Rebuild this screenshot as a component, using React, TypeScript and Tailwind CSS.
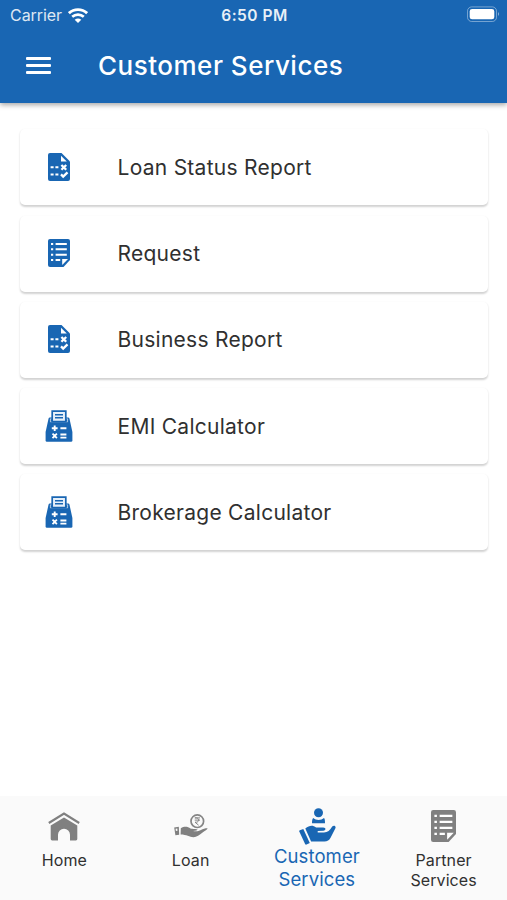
import React from "react";

interface IconProps {
  className?: string;
}

const ReportIcon: React.FC<IconProps> = ({ className }) => (
  <svg className={className} viewBox="0 0 22 28" fill="none">
    <path
      d="M2 0H13.5L22 8.5V26a2 2 0 0 1-2 2H2a2 2 0 0 1-2-2V2a2 2 0 0 1 2-2Z"
      fill="#1966b3"
    />
    <path d="M13 2.8V8.5H18.8Z" fill="#fff" />
    <path
      d="M2.6 14.3H5.6M7.4 14.3H10.4M2.6 21.5H5.6M7.4 21.5H10.4"
      stroke="#fff"
      strokeWidth="1.9"
    />
    <path
      d="M13.4 12L18.2 16.8M18.2 12L13.4 16.8M13 21.4L15.2 23.6L19.5 19.4"
      stroke="#fff"
      strokeWidth="2.3"
    />
  </svg>
);

const ListIcon: React.FC<IconProps> = ({ className }) => (
  <svg className={className} viewBox="0 0 22 28" fill="none">
    <path
      d="M2 0H20a2 2 0 0 1 2 2V21L15.5 28H2a2 2 0 0 1-2-2V2a2 2 0 0 1 2-2Z"
      fill="currentColor"
    />
    <path
      d="M3 5H5.2M3 10.3H5.2M3 15.7H5.2M3 21H5.2M7.6 5H18.8M7.6 10.3H18.8M7.6 15.7H18.8M7.6 21H12.2"
      stroke="#fff"
      strokeWidth="2"
    />
    <path d="M14.2 20H20L14.2 26Z" fill="#fff" />
  </svg>
);

const CalculatorIcon: React.FC<IconProps> = ({ className }) => (
  <svg className={className} viewBox="0 0 28 32" fill="none">
    <path
      d="M4.8 7.6H23.2Q24.2 7.6 24.5 8.8L27.4 22V30.4a1.3 1.3 0 0 1-1.3 1.3H1.9A1.3 1.3 0 0 1 .6 30.4V22L3.5 8.8Q3.8 7.6 4.8 7.6Z"
      fill="#1966b3"
    />
    <path d="M5.4 11.8V8.8H22.6V11.8Z" stroke="#fff" strokeWidth="0.8" opacity="0.8" />
    <path d="M7.2 11.6V1.2H20.8V11.6Z" fill="#e6f0fa" stroke="#1966b3" strokeWidth="1.7" />
    <path d="M10 4.8H18M10 7.8H18" stroke="#1966b3" strokeWidth="1.5" />
    <path
      d="M6.8 18.2H12.6M9.7 15.4V21M15.4 18.2H21.4"
      stroke="#fff"
      strokeWidth="1.9"
    />
    <path
      d="M7.5 23.6L11.9 28.2M11.9 23.6L7.5 28.2M15.4 24.5H21.4M15.4 27.7H21.4"
      stroke="#fff"
      strokeWidth="1.8"
    />
  </svg>
);

const HomeIcon: React.FC<IconProps> = ({ className }) => (
  <svg className={className} viewBox="0 0 32 29" fill="none">
    <path d="M.8 11L16 1.6L31.2 11" stroke="#808080" strokeWidth="2.2" />
    <path
      d="M16 5.6L29.3 13.6V27a1.4 1.4 0 0 1-1.4 1.4H22V22.8a6 6 0 0 0-12 0V28.4H4.1A1.4 1.4 0 0 1 2.7 27V13.6Z"
      fill="#808080"
    />
  </svg>
);

const LoanIcon: React.FC<IconProps> = ({ className }) => (
  <svg className={className} viewBox="0 0 34 24" fill="none">
    <circle cx="23.3" cy="7.2" r="6.3" stroke="#858585" strokeWidth="1.7" />
    <path
      d="M20.7 3.9H26M20.7 6.1H26M21 3.9H22.3C25.4 3.9 25.4 8.2 22.3 8.2H21L24.6 11.2"
      stroke="#858585"
      strokeWidth="1"
    />
    <path
      d="M6.8 14.2C10.5 11.9 13.8 12.6 16.5 14.4C18.5 15.2 22.8 14.5 23.4 15.6C23.8 16.6 22 16.8 19 17C22 17.8 24.5 17.2 27 16C29 14.9 31.4 14.2 33.6 14.3C33.5 15.8 30.8 16.8 28.6 18.5C25.5 21 22.5 23.3 19.4 23.2C15.5 23 12.5 20.5 6.6 20.5Z"
      fill="#808080"
    />
    <path d="M.2 13.4L4.8 12.8L5.2 20.8L1.4 21.2Z" fill="#808080" />
    <path d="M1.6 14.7L3.3 14.5L3.5 16.7L1.9 16.9Z" fill="#fafafa" />
  </svg>
);

const CustomerIcon: React.FC<IconProps> = ({ className }) => (
  <svg className={className} viewBox="0 0 37 37" fill="#1966b3">
    <circle cx="19.5" cy="4.7" r="4.5" />
    <path d="M14.2 10.1C17 12.7 22.2 12.7 25 10.1C25.8 11 26 12.4 26 15.2H13C13 12.4 13.4 11 14.2 10.1Z" />
    <path d="M.8 22.3L4.3 21L10.8 34.9L7.5 36.6Q6.6 37 6.1 36.1L.3 23.6Q0 22.7 .8 22.3Z" />
    <path d="M6.3 20.5C10.4 17.2 13.7 17 17.1 19.4H24.2C27.3 19.5 27.1 22.4 24.4 22.7L18.7 23.1V24.6H25C28.6 24.5 31 22.4 33.2 18.6C34.6 16.7 37.4 17.8 36.4 20.2L31.7 29.6C30 32.6 28.5 33.5 25.4 33.5H12.1Z" />
  </svg>
);

const WifiIcon: React.FC<IconProps> = ({ className }) => (
  <svg className={className} viewBox="0 0 20 15" fill="none">
    <path d="M.9 5.2C6 .4 14 .4 19.1 5.2" stroke="#fff" strokeWidth="2.8" />
    <path d="M4.2 8.8C7.5 5.9 12.5 5.9 15.8 8.8" stroke="#fff" strokeWidth="2.7" />
    <path d="M10 14.9L6.7 11.8Q10 9.1 13.3 11.8Z" fill="#fff" />
  </svg>
);

const services = [
  { title: "Loan Status Report", icon: <ReportIcon className="w-[22px] h-7" /> },
  { title: "Request", icon: <ListIcon className="w-[22px] h-7 text-[#1966b3]" /> },
  { title: "Business Report", icon: <ReportIcon className="w-[22px] h-7" /> },
  { title: "EMI Calculator", icon: <CalculatorIcon className="w-7 h-8" /> },
  { title: "Brokerage Calculator", icon: <CalculatorIcon className="w-7 h-8" /> },
];

const StatusBar: React.FC = () => (
  <div className="grid grid-cols-3 items-center h-[30px] pl-[10px] pr-[7px] text-white">
    <div className="flex items-center gap-[6px]">
      <span className="text-[16px] leading-5 tracking-[-0.05px] opacity-85">Carrier</span>
      <WifiIcon className="w-5 h-[15px]" />
    </div>
    <span className="pt-px pr-[1px] text-center text-[15.5px] leading-5 font-semibold tracking-[0.5px] whitespace-nowrap opacity-90">
      6:50 PM
    </span>
    <svg className="w-[34px] h-4 -mt-[2px] justify-self-end" viewBox="0 0 34 16" fill="none">
      <rect x="1.5" y=".9" width="29" height="14.6" rx="4.2" stroke="#fff" strokeOpacity=".4" />
      <rect x="3.7" y="3.1" width="24.6" height="10.2" rx="2.4" fill="#fff" />
      <path d="M32 6.1Q34 8.1 32 10.1Z" fill="#fff" fillOpacity=".5" />
    </svg>
  </div>
);

const App: React.FC = () => {
  return (
    <div className="flex flex-col w-full h-[900px] overflow-hidden bg-white font-[Inter,'Liberation_Sans',sans-serif] text-[#303030]">
      <header className="h-[103px] shrink-0 bg-[#1966b3] shadow-[0_2px_5px_rgba(0,0,0,0.35)]">
        <StatusBar />
        <div className="flex items-center h-[72px] pl-[26px]">
          <button type="button" aria-label="Menu" className="flex flex-col gap-[4px] w-[25px] -mt-px">
            <span className="h-[3px] rounded-[1px] bg-white" />
            <span className="h-[3px] rounded-[1px] bg-white" />
            <span className="h-[3px] rounded-[1px] bg-white" />
          </button>
          <h1 className="ml-[47px] text-[26px] leading-8 font-[550] tracking-[0.5px] whitespace-nowrap text-white">
            Customer Services
          </h1>
        </div>
      </header>

      <main className="flex flex-1 flex-col gap-[10.25px] px-5 pt-[26.25px]">
        {services.map((service) => (
          <div
            key={service.title}
            className="flex items-center h-[76px] w-[468px] rounded-[5px] bg-white shadow-[0_1.5px_2px_rgba(0,0,0,0.18)]"
          >
            <div className="flex justify-center w-[77px] pb-px">{service.icon}</div>
            <span className="ml-[20.5px] pt-px text-[21px] leading-7 tracking-[0.27px] whitespace-nowrap">
              {service.title}
            </span>
          </div>
        ))}
      </main>

      <nav className="grid grid-cols-4 h-[104px] shrink-0 bg-[#fafafa] text-center text-[16px] leading-5 tracking-[0.1px]">
        <div className="flex flex-col items-center pt-4 pl-[2px]">
          <HomeIcon className="w-8 h-[29px]" />
          <span className="mt-[9px]">Home</span>
        </div>
        <div className="flex flex-col items-center pt-[18px] pl-px">
          <LoanIcon className="w-[34px] h-6" />
          <span className="mt-3">Loan</span>
        </div>
        <div className="flex flex-col items-center pt-3 text-[18.5px] leading-[23px] text-[#1966b3]">
          <CustomerIcon className="w-[37px] h-[37px] ml-px" />
          <span>
            Customer
            <br />
            Services
          </span>
        </div>
        <div className="flex flex-col items-center pt-[14px]">
          <ListIcon className="w-[25px] h-8 text-[#808080]" />
          <span className="mt-2">
            Partner
            <br />
            Services
          </span>
        </div>
      </nav>
    </div>
  );
};

export default App;
